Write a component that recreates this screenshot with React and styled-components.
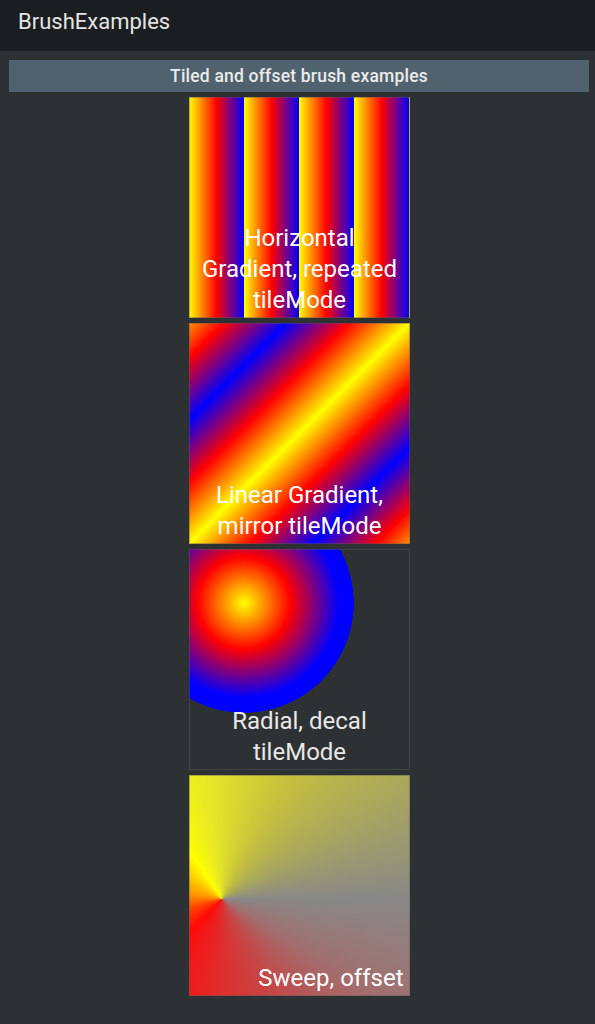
import React from "react";
import styled, { createGlobalStyle } from "styled-components";

const GlobalStyle = createGlobalStyle`
  html, body {
    margin: 0;
    padding: 0;
    background: #2e3134;
    font-family: Roboto, "Noto Sans", "Liberation Sans", sans-serif;
  }
  * { box-sizing: border-box; }
`;

const Page = styled.div`
  min-height: 1024px;
  background: #2e3134;
  display: flex;
  flex-direction: column;
`;

const TopBar = styled.header`
  height: 51px;
  background: #1b1e21;
  display: flex;
  align-items: center;
  padding: 0 0 8px 18px;
  color: #e4e4e4;
  font-size: 22px;
  font-weight: 400;
`;

const Content = styled.main`
  padding: 9px 6px 0 9px;
  display: flex;
  flex-direction: column;
  align-items: stretch;
`;

const Banner = styled.div`
  height: 32px;
  background: #4f626e;
  color: #ebebeb;
  font-size: 17.5px;
  font-weight: 500;
  display: flex;
  align-items: center;
  justify-content: center;
  letter-spacing: 0.2px;
`;

const Column = styled.div`
  margin-top: 5px;
  display: flex;
  flex-direction: column;
  align-items: center;
  gap: 5px;
`;

const Tile = styled.div`
  width: 221px;
  height: 221px;
  border: 1px solid rgba(90, 90, 90, 0.45);
  background: ${(p) => p.$bg};
  background-origin: border-box;
  background-repeat: no-repeat;
  display: flex;
  align-items: flex-end;
  justify-content: ${(p) => (p.$end ? "flex-end" : "center")};
  padding: 0 5px 1px 6px;
`;

const Caption = styled.span`
  color: ${(p) => p.$color || "#ffffff"};
  font-size: 24px;
  line-height: 31px;
  text-align: ${(p) => (p.$end ? "right" : "center")};
`;

const horizontal =
  "repeating-linear-gradient(90deg, #ffff00 0px, #ff0000 27.5px, #0000ff 55px)";
const mirror =
  "repeating-linear-gradient(135deg, #ffff00 -19px, #ff0000 25px, #0000ff 69px, #ff0000 113px, #ffff00 156px)";
const radial =
  "radial-gradient(circle 110px at 55px 54px, #ffff00 0%, #ff0000 42%, #0000ff 86%, #0000ff 99.5%, rgba(0,0,255,0) 100%)";
const sweep =
  "conic-gradient(from 90deg at 33px 124px, #888888 0deg, #a07070 30deg, #c44848 60deg, #e82424 100deg, #ff0a0a 135deg, #ff4800 165deg, #ff8c00 185deg, #ffc400 212deg, #ffff00 236deg, #e8e826 262deg, #c4c03e 300deg, #a8a65e 330deg, #888888 360deg)";

const items = [
  { bg: horizontal, text: "Horizontal Gradient, repeated tileMode" },
  { bg: mirror, text: "Linear Gradient, mirror tileMode" },
  { bg: radial, text: "Radial, decal tileMode", color: "#e8e8e8" },
  { bg: sweep, text: "Sweep, offset", end: true },
];

export default function App() {
  return (
    <>
      <GlobalStyle />
      <Page>
        <TopBar>BrushExamples</TopBar>
        <Content>
          <Banner>Tiled and offset brush examples</Banner>
          <Column>
            {items.map((it) => (
              <Tile key={it.text} $bg={it.bg} $end={it.end}>
                <Caption $color={it.color} $end={it.end}>
                  {it.text}
                </Caption>
              </Tile>
            ))}
          </Column>
        </Content>
      </Page>
    </>
  );
}
